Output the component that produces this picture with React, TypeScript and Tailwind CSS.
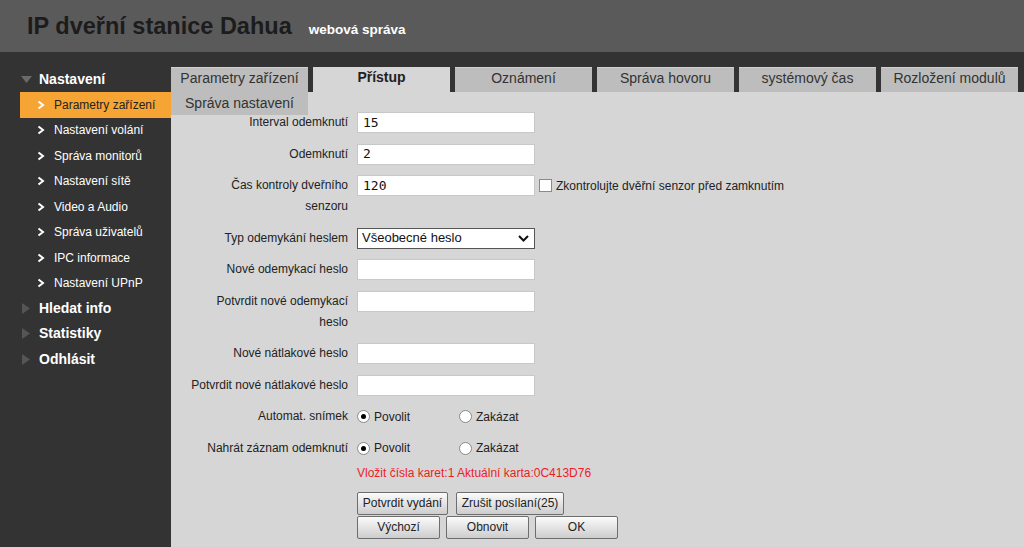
import React from 'react';

const subItems = [
  'Parametry zařízení',
  'Nastavení volání',
  'Správa monitorů',
  'Nastavení sítě',
  'Video a Audio',
  'Správa uživatelů',
  'IPC informace',
  'Nastavení UPnP',
];

const tabs = ['Parametry zařízení', 'Přístup', 'Oznámení', 'Správa hovoru', 'systémový čas', 'Rozložení modulů'];

const Chevron: React.FC = () => (
  <svg width="8" height="10" viewBox="0 0 8 10" className="shrink-0">
    <path d="M1.5 1.5 L6 5 L1.5 8.5" fill="none" stroke="#fff" strokeWidth="2" />
  </svg>
);

const TriDown: React.FC = () => (
  <svg width="11" height="8" viewBox="0 0 11 8" className="shrink-0">
    <path d="M0 0 H11 L5.5 7 Z" fill="#6a6a6a" />
  </svg>
);

const TriRight: React.FC = () => (
  <svg width="8" height="11" viewBox="0 0 8 11" className="shrink-0">
    <path d="M0 0 L8 5.5 L0 11 Z" fill="#555" />
  </svg>
);

const Row: React.FC<{ label: React.ReactNode; children?: React.ReactNode }> = ({ label, children }) => (
  <div className="flex items-start">
    <div className="w-[177px] shrink-0 text-right leading-[21px] whitespace-nowrap text-[#222]">{label}</div>
    <div className="ml-[9px] flex items-center h-[21px]">{children}</div>
  </div>
);

const TextInput: React.FC<{ value?: string }> = ({ value = '' }) => (
  <div className="w-[178px] h-[21px] bg-white border border-[#c8c8c8] flex items-center px-[5px] text-[13px] text-[#111] font-['DejaVu_Sans_Mono',monospace]">
    {value}
  </div>
);

const Radio: React.FC<{ checked?: boolean; label: string }> = ({ checked, label }) => (
  <div className="flex items-center w-[102px]">
    <span className="w-[13px] h-[13px] rounded-full border border-[#8a8a8a] bg-white flex items-center justify-center">
      {checked && <span className="w-[5px] h-[5px] rounded-full bg-black" />}
    </span>
    <span className="ml-[4px] text-[#222]">{label}</span>
  </div>
);

const Btn: React.FC<{ w: string; children: React.ReactNode }> = ({ w, children }) => (
  <div
    className={`${w} h-[23px] flex items-center justify-center border border-[#6e6e6e] rounded-[2px] bg-gradient-to-b from-[#fbfbfb] to-[#cdcdcd] text-[#222]`}
  >
    {children}
  </div>
);

export default function App() {
  return (
    <div className="w-[1024px] h-[547px] overflow-hidden flex flex-col bg-[#333333] font-['Liberation_Sans',Arial,sans-serif] text-[12px]">
      <header className="h-[52px] shrink-0 bg-[#5a5a5a] flex items-baseline pl-[27px] pt-[12px]">
        <h1 className="text-[23.5px] font-bold text-[#1c1c1c] leading-[28px]">IP dveřní stanice Dahua</h1>
        <span className="ml-[17px] text-[13.5px] font-bold text-white">webová správa</span>
      </header>

      <div className="flex flex-1 min-h-0">
        <aside className="w-[171px] shrink-0 pt-[15px]">
          <div className="h-[25px] flex items-center pl-[21px] gap-[7px] text-white text-[14px] font-bold">
            <TriDown />
            <span>Nastavení</span>
          </div>
          {subItems.map((item, i) => (
            <div
              key={item}
              className={
                i === 0
                  ? 'h-[25.5px] ml-[20px] bg-[#f6a534] flex items-center pl-[17px] gap-[9px] text-[#222]'
                  : 'h-[25.5px] ml-[20px] flex items-center pl-[17px] gap-[9px] text-white'
              }
            >
              <Chevron />
              <span>{item}</span>
            </div>
          ))}
          {['Hledat info', 'Statistiky', 'Odhlásit'].map((t) => (
            <div key={t} className="h-[25.3px] flex items-center pl-[22px] gap-[9px] text-white text-[14px] font-bold">
              <TriRight />
              <span>{t}</span>
            </div>
          ))}
        </aside>

        <main className="flex-1 flex flex-col pt-[15px] min-w-0">
          <div className="flex gap-[5px] h-[25px] shrink-0">
            {tabs.map((t, i) => (
              <div
                key={t}
                className={
                  i === 1
                    ? 'w-[137px] h-full flex items-center justify-center pb-[4px] bg-[#d6d6d6] text-[14px] font-bold text-[#222]'
                    : 'w-[137px] h-full flex items-center justify-center pb-[4px] bg-[#bdbdbd] border-t border-[#d0d0d0] text-[14px] text-[#333]'
                }
              >
                {t}
              </div>
            ))}
          </div>
          <div className="flex-1 bg-[#d6d6d6]">
            <div className="w-[137px] h-[23px] mb-[-3px] bg-[#bdbdbd] flex items-center justify-center text-[14px] text-[#333]">
              Správa nastavení
            </div>
            <div className="flex flex-col gap-[10.5px]">
              <Row label="Interval odemknutí">
                <TextInput value="15" />
              </Row>
              <Row label="Odemknutí">
                <TextInput value="2" />
              </Row>
              <Row
                label={
                  <>
                    Čas kontroly dveřního
                    <br />
                    senzoru
                  </>
                }
              >
                <TextInput value="120" />
                <span className="ml-[4px] w-[13px] h-[13px] border border-[#8a8a8a] bg-white" />
                <span className="ml-[4px] text-[#222]">Zkontrolujte dvěřní senzor před zamknutím</span>
              </Row>
              <Row label="Typ odemykání heslem">
                <div className="w-[178px] h-[21px] bg-white border border-[#555] flex items-center justify-between pl-[4px] pr-[5px] text-[13px] text-[#111]">
                  <span>Všeobecné heslo</span>
                  <svg width="11" height="7" viewBox="0 0 11 7">
                    <path d="M1 1 L5.5 5.5 L10 1" fill="none" stroke="#111" strokeWidth="2" />
                  </svg>
                </div>
              </Row>
              <Row label="Nové odemykací heslo">
                <TextInput />
              </Row>
              <Row
                label={
                  <>
                    Potvrdit nové odemykací
                    <br />
                    heslo
                  </>
                }
              >
                <TextInput />
              </Row>
              <Row label="Nové nátlakové heslo">
                <TextInput />
              </Row>
              <Row label="Potvrdit nové nátlakové heslo">
                <TextInput />
              </Row>
              <Row label="Automat. snímek">
                <Radio checked label="Povolit" />
                <Radio label="Zakázat" />
              </Row>
              <Row label="Nahrát záznam odemknutí">
                <Radio checked label="Povolit" />
                <Radio label="Zakázat" />
              </Row>
            </div>
            <div className="ml-[186px] mt-[4px] leading-[21px] text-[#ee1c25]">
              Vložit čísla karet:1 Aktuální karta:0C413D76
            </div>
            <div className="ml-[186px] mt-[8px] flex gap-[8px]">
              <Btn w="w-[91px]">Potvrdit vydání</Btn>
              <Btn w="w-[108px]">Zrušit posílaní(25)</Btn>
            </div>
            <div className="ml-[186px] mt-px flex gap-[6px]">
              <Btn w="w-[83px]">Výchozí</Btn>
              <Btn w="w-[83px]">Obnovit</Btn>
              <Btn w="w-[83px]">OK</Btn>
            </div>
          </div>
        </main>
      </div>
    </div>
  );
}
